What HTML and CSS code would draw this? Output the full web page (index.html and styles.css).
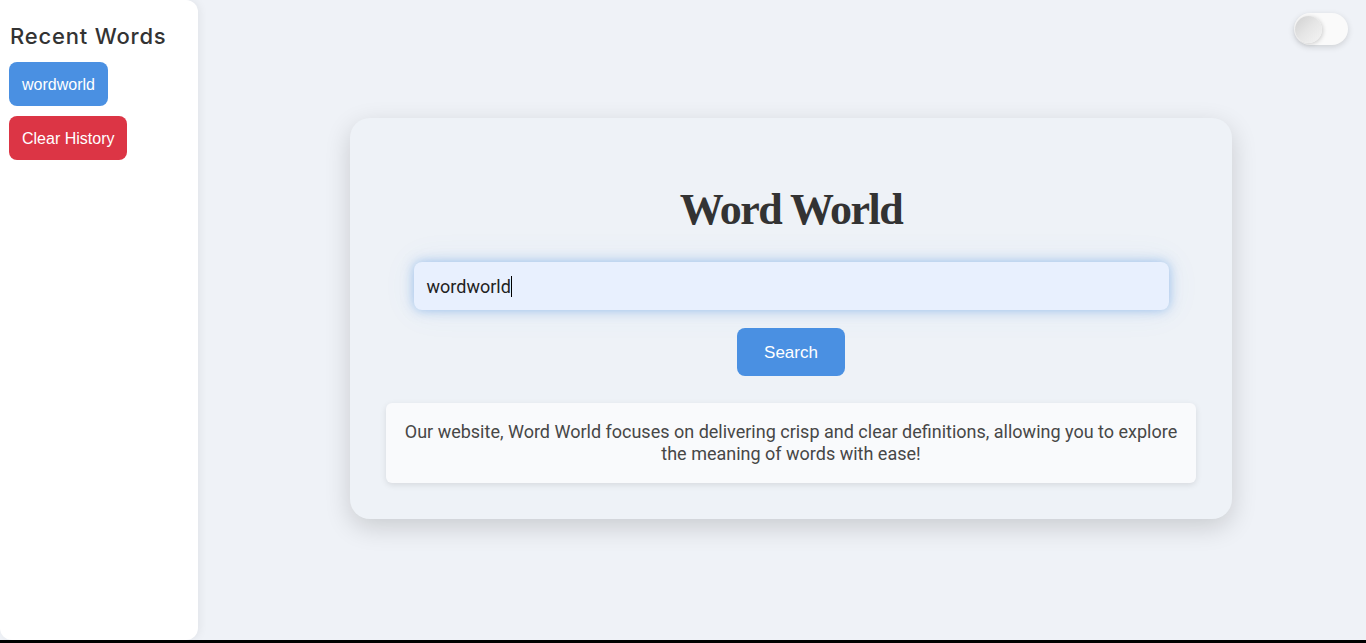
FILE: index.html
```html
<!DOCTYPE html>
<html lang="en">
<head>
<meta charset="utf-8">
<title>Word World</title>
<link rel="stylesheet" href="styles.css">
</head>
<body>
<div class="app">
  <aside class="sidebar">
    <h2 class="sidebar-title">Recent Words</h2>
    <button class="btn btn-word">wordworld</button>
    <button class="btn btn-clear">Clear History</button>
  </aside>
  <main class="main">
    <div class="topbar">
      <div class="toggle"><span class="knob"></span></div>
    </div>
    <section class="card">
      <h1 class="title">Word World</h1>
      <div class="field">wordworld<span class="caret"></span></div>
      <button class="btn-search">Search</button>
      <p class="about">Our website, Word World focuses on delivering crisp and clear definitions, allowing you to explore the meaning of words with ease!</p>
    </section>
  </main>
</div>
</body>
</html>
```
FILE: styles.css
```css
html {
  background: #000;
}
body {
  margin: 0;
  height: 640px;
  overflow: hidden;
  background: #eff2f7;
  font-family: Roboto, "Liberation Sans", sans-serif;
}
.app {
  display: flex;
  height: 640px;
}
.sidebar {
  width: 198px;
  flex: none;
  box-sizing: border-box;
  background: #fff;
  border-radius: 0 12px 12px 12px;
  box-shadow: 2px 0 8px rgba(0, 0, 0, 0.06);
  padding: 0 9px;
  display: flex;
  flex-direction: column;
  align-items: flex-start;
}
.sidebar-title {
  font-family: Inter, "Open Sans", sans-serif;
  font-size: 22px;
  font-weight: 500;
  letter-spacing: 0.8px;
  line-height: 26px;
  color: #333;
  margin: 23px 0 13px 1px;
}
.btn {
  border: none;
  border-radius: 8px;
  color: #fff;
  font-family: "Liberation Sans", Arial, sans-serif;
  font-size: 16px;
  line-height: 18px;
  padding: 14px 13px 12px;
  cursor: pointer;
}
.btn-word {
  background: #4a90e2;
  margin-bottom: 10px;
}
.btn-clear {
  background: #dc3545;
}
.main {
  flex: 1;
  display: flex;
  flex-direction: column;
  padding: 13px 18px 0 36px;
}
.topbar {
  display: flex;
  justify-content: flex-end;
}
.toggle {
  width: 54px;
  height: 32px;
  box-sizing: border-box;
  border-radius: 16px;
  background: #fafafa;
  box-shadow: 0 2px 6px rgba(0, 0, 0, 0.14);
  display: flex;
  align-items: center;
  padding: 0 1px;
}
.knob {
  width: 27px;
  height: 27px;
  border-radius: 50%;
  background: linear-gradient(135deg, #d0d0d0 0%, #e6e6e6 50%, #f4f4f4 100%);
  box-shadow: 1px 1px 4px rgba(0, 0, 0, 0.18);
}
.card {
  width: 882px;
  align-self: center;
  margin-top: 73px;
  box-sizing: border-box;
  padding: 36px 36px 36px;
  border-radius: 20px;
  background: #eef2f7;
  box-shadow: 0 8px 26px rgba(0, 0, 0, 0.16);
  display: flex;
  flex-direction: column;
  align-items: center;
}
.title {
  font-family: "Liberation Serif", "Times New Roman", serif;
  font-weight: 700;
  font-size: 44px;
  letter-spacing: -1.5px;
  line-height: 50px;
  color: #333;
  margin: 31px 0 27px;
}
.field {
  width: 755px;
  height: 48px;
  box-sizing: border-box;
  padding: 0 13px;
  display: flex;
  align-items: center;
  background: #e8f0fe;
  border-radius: 8px;
  box-shadow: 0 0 12px rgba(74, 144, 226, 0.5), 0 0 34px rgba(74, 144, 226, 0.08);
  font-size: 18px;
  color: #222;
  margin-bottom: 18px;
}
.caret {
  display: inline-block;
  width: 1px;
  height: 21px;
  background: #000;
  margin-left: 0;
}
.btn-search {
  width: 108px;
  height: 48px;
  border: none;
  border-radius: 8px;
  background: #4a90e2;
  color: #fff;
  font-family: "Liberation Sans", Arial, sans-serif;
  font-size: 17px;
  padding-top: 2px;
  margin-bottom: 27px;
  cursor: pointer;
}
.about {
  width: 100%;
  box-sizing: border-box;
  margin: 0;
  padding: 18px 16px;
  background: #f9fafc;
  border-radius: 6px;
  box-shadow: 0 2px 6px rgba(0, 0, 0, 0.1);
  font-size: 18px;
  line-height: 22px;
  color: #474747;
  text-align: center;
}
```
